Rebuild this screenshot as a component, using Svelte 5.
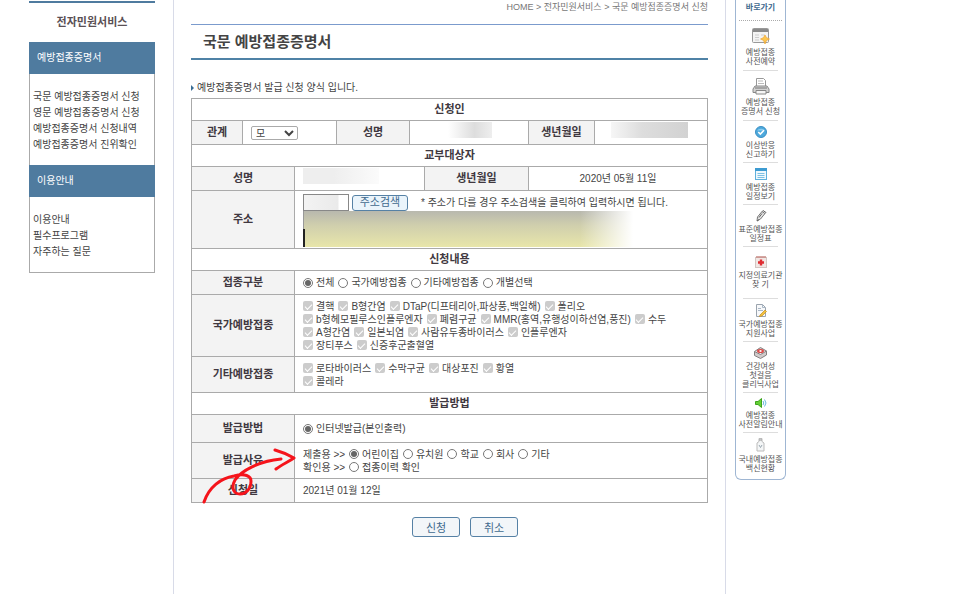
<script lang="ts">
	const menus = [
		{
			title: '예방접종증명서',
			items: [
				'국문 예방접종증명서 신청',
				'영문 예방접종증명서 신청',
				'예방접종증명서 신청내역',
				'예방접종증명서 진위확인'
			]
		},
		{ title: '이용안내', items: ['이용안내', '필수프로그램', '자주하는 질문'] }
	];

	const quickLinks = [
		{ icon: 'reserve', lines: ['예방접종', '사전예약'], size: 'roomy' },
		{ icon: 'printer', lines: ['예방접종', '증명서 신청'], size: 'roomy' },
		{ icon: 'check', lines: ['이상반응', '신고하기'] },
		{ icon: 'schedule', lines: ['예방접종', '일정보기'] },
		{ icon: 'pen', lines: ['표준예방접종', '일정표'] },
		{ icon: 'hospital', lines: ['지정의료기관', '찾 기'], size: 'tall' },
		{ icon: 'note', lines: ['국가예방접종', '지원사업'] },
		{ icon: 'box', lines: ['건강여성', '첫걸음', '클리닉사업'] },
		{ icon: 'speaker', lines: ['예방접종', '사전알림안내'] },
		{ icon: 'bottle', lines: ['국내예방접종', '백신현황'] }
	];

	const kinds = ['전체', '국가예방접종', '기타예방접종', '개별선택'];

	const nationalVaccines = [
		['결핵', 'B형간염', 'DTaP(디프테리아,파상풍,백일해)', '폴리오'],
		['b형헤모필루스인플루엔자', '폐렴구균', 'MMR(홍역,유행성이하선염,풍진)', '수두'],
		['A형간염', '일본뇌염', '사람유두종바이러스', '인플루엔자'],
		['장티푸스', '신증후군출혈열']
	];
	const otherVaccines = [['로타바이러스', '수막구균', '대상포진', '황열'], ['콜레라']];

	const reasons: { title: string; options: string[] }[] = [
		{ title: '제출용 >>', options: ['어린이집', '유치원', '학교', '회사', '기타'] },
		{ title: '확인용 >>', options: ['접종이력 확인'] }
	];

	let kind = $state('전체');
	let method = $state('인터넷발급(본인출력)');
	let reason = $state('어린이집');
	let relation = $state('모');
</script>

{#snippet vaccineRows(rows: string[][])}
	{#each rows as row, i (i)}
		<div class="line">
			{#each row as name (name)}
				<label><input type="checkbox" checked disabled />{name}</label>
			{/each}
		</div>
	{/each}
{/snippet}

{#snippet quickIcon(name: string)}
	{#if name === 'reserve'}
		<svg width="18" height="17" viewBox="0 0 18 17">
			<rect x="0.5" y="0.5" width="16" height="14" rx="1" fill="#f4f4f4" stroke="#999" />
			<path d="M1 1h15v3H1z" fill="#8a8a8a" />
			<path d="M3 7h4M3 9.500h4M3 12h4M9 7h4" stroke="#ccc" />
			<path d="M13 7l1.400 2.600L17.500 11l-3 1.400L13 16l-1.500-3.600L8.500 11l3-1.400z" fill="#fcc64f" stroke="#eda63a" stroke-width=".7" />
		</svg>
	{:else if name === 'printer'}
		<svg width="18" height="17" viewBox="0 0 18 17">
			<path d="M4.500 8V.5h7l2 2V8" fill="#fff" stroke="#999" />
			<path d="M6 3h5M6 5.500h6" stroke="#bbb" />
			<path d="M3 8h12l2 3v3.500H1V11z" fill="#d2d2d2" stroke="#888" />
			<path d="M4 12.500h10v3.500H4z" fill="#f5f5f5" stroke="#888" />
			<path d="M3 10h12" stroke="#777" />
		</svg>
	{:else if name === 'check'}
		<svg width="12" height="12" viewBox="0 0 12 12">
			<circle cx="6" cy="6" r="5.500" fill="#4ea9dc" stroke="#3b8fc4" />
			<path d="M2 4.500a4.500 3 0 0 1 8 0" fill="#8ccdf0" />
			<path d="M3.300 6l2 2L9 4.300" fill="none" stroke="#fff" stroke-width="1.600" />
		</svg>
	{:else if name === 'schedule'}
		<svg width="12" height="12" viewBox="0 0 12 12">
			<rect x="0.5" y="0.5" width="11" height="11" fill="#eef8fd" stroke="#5eb0dc" />
			<path d="M0 0h12v3H0z" fill="#3d9bd1" />
			<path d="M2.500 5.500h7M2.500 7.500h7M2.500 9.500h7" stroke="#7cc0e3" />
		</svg>
	{:else if name === 'pen'}
		<svg width="12" height="12" viewBox="0 0 12 12">
			<path d="M2 11l.5-4L7 1.500l3 2L5.500 9z" fill="#e4e4e4" stroke="#777" />
			<path d="M7 1.500L8 .5l3 2-1 1M4 7.500l3-4M2 11l2-1.500" fill="none" stroke="#666" />
		</svg>
	{:else if name === 'hospital'}
		<svg width="12" height="12" viewBox="0 0 12 12">
			<rect x="0.5" y="1.500" width="11" height="10" fill="#f1e7e4" stroke="#d3c6c2" />
			<path d="M1 1h10" stroke="#c98a84" stroke-width="1.500" />
			<path d="M6 3.500v6M3 6.500h6" stroke="#df2d32" stroke-width="2.400" />
		</svg>
	{:else if name === 'note'}
		<svg width="12" height="13" viewBox="0 0 12 13">
			<path d="M1.500.5h6l3 3v9h-9z" fill="#f7f8fa" stroke="#9ba4ae" />
			<path d="M7.500.5v3h3M3 4.500h3M3 6.500h5" fill="none" stroke="#a9b7c5" />
			<path d="M5 11l5-5 1.500 1.500L7 12l-2.500.5z" fill="#f3c23c" stroke="#c48d23" stroke-width=".7" />
		</svg>
	{:else if name === 'box'}
		<svg width="13" height="12" viewBox="0 0 13 12">
			<path d="M.5 4.500L6.500.5l6 3.500V8l-6 3.500-6-3z" fill="#d0cbcb" stroke="#858080" />
			<path d="M.5 4.500l6 3 6-3.500" fill="#f4f0f0" stroke="#858080" />
			<ellipse cx="6.500" cy="4" rx="3.500" ry="2" fill="#dc4a48" />
			<path d="M5 4h3M6.500 3v2" stroke="#fff" stroke-width=".8" />
		</svg>
	{:else if name === 'speaker'}
		<svg width="12" height="10" viewBox="0 0 12 10">
			<path d="M.5 3.500h2.500L6.500.5v9L3 6.500H.5z" fill="#65cf35" stroke="#3da51d" />
			<path d="M8 3q1.500 2 0 4M9.500 1.500q3 3.500 0 7" fill="none" stroke="#6bb9dc" />
		</svg>
	{:else}
		<svg width="9" height="14" viewBox="0 0 9 14">
			<path d="M3 .5h3v3l2 1.500v8H1V5l2-1.500z" fill="#f4f6f7" stroke="#bbb" />
			<path d="M3 2h3" stroke="#999" />
			<path d="M3 7l1.500 2.500L6 7" fill="none" stroke="#9aa7b0" />
		</svg>
	{/if}
{/snippet}

<div class="page">
	<aside class="side">
		<h2>전자민원서비스</h2>
		<nav>
			{#each menus as menu (menu.title)}
				<h3>{menu.title}</h3>
				<ul>
					{#each menu.items as item (item)}
						<li><a href="#menu">{item}</a></li>
					{/each}
				</ul>
			{/each}
		</nav>
	</aside>

	<main>
		<p class="breadcrumb">HOME &gt; 전자민원서비스 &gt; 국문 예방접종증명서 신청</p>
		<h1>국문 예방접종증명서</h1>
		<p class="guide">예방접종증명서 발급 신청 양식 입니다.</p>

		<form onsubmit={(e) => e.preventDefault()}>
			<div class="sheet">
				<table>
					<colgroup>
						<col class="c1" /><col class="c2" /><col class="c3" /><col class="c4" />
						<col class="c5" /><col class="c6" /><col class="c7" /><col class="c8" />
					</colgroup>
					<tbody>
						<tr class="section"><th colspan="8">신청인</th></tr>
						<tr class="single">
							<th scope="row"><label for="relation">관계</label></th>
							<td colspan="2">
								<select id="relation" bind:value={relation}>
									<option>모</option>
									<option>부</option>
								</select>
							</td>
							<th scope="row">성명</th>
							<td colspan="2"><div class="masked applicant"></div></td>
							<th scope="row">생년월일</th>
							<td><div class="masked birth"></div></td>
						</tr>

						<tr class="section"><th colspan="8">교부대상자</th></tr>
						<tr class="single">
							<th scope="row" colspan="2">성명</th>
							<td colspan="3"><div class="masked child"></div></td>
							<th scope="row">생년월일</th>
							<td colspan="2" class="center">2020년 05월 11일</td>
						</tr>
						<tr class="address">
							<th scope="row" colspan="2">주소</th>
							<td colspan="6">
								<div class="zip-row">
									<input class="zip" type="text" aria-label="우편번호" />
									<button type="button" class="search">주소검색</button>
									<span>* 주소가 다를 경우 주소검색을 클릭하여 입력하시면 됩니다.</span>
								</div>
								<div class="address-lines">
									<input type="text" aria-label="주소" />
									<input type="text" class="detail" aria-label="상세주소" />
								</div>
							</td>
						</tr>

						<tr class="section"><th colspan="8">신청내용</th></tr>
						<tr class="single">
							<th scope="row" colspan="2">접종구분</th>
							<td colspan="6">
								<div class="line">
									{#each kinds as option (option)}
										<label><input type="radio" name="kind" value={option} bind:group={kind} />{option}</label>
									{/each}
								</div>
							</td>
						</tr>
						<tr class="national">
							<th scope="row" colspan="2">국가예방접종</th>
							<td colspan="6">{@render vaccineRows(nationalVaccines)}</td>
						</tr>
						<tr class="double">
							<th scope="row" colspan="2">기타예방접종</th>
							<td colspan="6">{@render vaccineRows(otherVaccines)}</td>
						</tr>

						<tr class="section"><th colspan="8">발급방법</th></tr>
						<tr class="method">
							<th scope="row" colspan="2">발급방법</th>
							<td colspan="6">
								<div class="line">
									<label>
										<input type="radio" name="method" value="인터넷발급(본인출력)" bind:group={method} />인터넷발급(본인출력)
									</label>
								</div>
							</td>
						</tr>
						<tr class="double">
							<th scope="row" colspan="2">발급사유</th>
							<td colspan="6">
								{#each reasons as group (group.title)}
									<div class="line">
										<span>{group.title}</span>
										{#each group.options as option (option)}
											<label><input type="radio" name="reason" value={option} bind:group={reason} />{option}</label>
										{/each}
									</div>
								{/each}
							</td>
						</tr>
						<tr class="single">
							<th scope="row" colspan="2">신청일</th>
							<td colspan="6">2021년 01월 12일</td>
						</tr>
					</tbody>
				</table>

				<!-- hand-drawn arrow pointing at the reason row -->
				<svg class="arrow" width="96" height="58" viewBox="200 446 96 58" aria-hidden="true">
					<path d="M204 501C209 486 221 477 234 475C245 472 251 475 251 480C251 488 246 493 240 493C233 493 231 486 235 479C241 470 259 460 281 458" />
					<path d="M275 449C282 451 289 454 294 457C288 461 281 464 276 468" />
				</svg>
			</div>

			<div class="actions">
				<button type="submit">신청</button>
				<button type="button">취소</button>
			</div>
		</form>
	</main>

	<aside class="quick">
		<h2>바로가기</h2>
		<ul>
			{#each quickLinks as link (link.icon)}
				<li class={link.size}>
					<a href="#quick">
						{@render quickIcon(link.icon)}
						<span>
							{#each link.lines as text, i (i)}{#if i > 0}<br />{/if}{text}{/each}
						</span>
					</a>
				</li>
			{/each}
		</ul>
	</aside>
</div>

<style>
	:global(body) {
		background: #fff;
	}

	.page {
		display: flex;
		align-items: flex-start;
		box-sizing: border-box;
		max-width: 786px;
		min-height: 100vh;
		padding-left: 29px;
		font-family: 'Liberation Sans', 'Noto Sans CJK KR', sans-serif;
		font-size: 10px;
		line-height: 13px;
		color: #444;
	}

	h1,
	h2,
	h3,
	p,
	ul {
		margin: 0;
		padding: 0;
	}

	ul {
		list-style: none;
	}

	a {
		color: inherit;
		text-decoration: none;
	}

	input,
	select,
	button {
		box-sizing: border-box;
		margin: 0;
		font-family: inherit;
		font-size: inherit;
		color: inherit;
	}

	/* left menu */
	.side {
		flex: none;
		width: 126px;
		margin-top: 1px;
		border-top: 2px solid #4f7b9f;
	}

	.side h2 {
		padding: 11px 0 12px;
		text-align: center;
		font-size: 11px;
		line-height: 16px;
		color: #5a5055;
	}

	.side nav {
		border: 1px solid #aaa;
		border-top: 0;
	}

	.side h3 {
		margin: 0 -1px;
		padding: 8px;
		background: #4f7b9f;
		color: #fff;
		font-size: 10px;
		font-weight: 400;
		line-height: 16px;
	}

	.side ul {
		padding: 15px 3px 12px;
		line-height: 16px;
		white-space: nowrap;
	}

	/* main column */
	main {
		flex: 1;
		min-width: 0;
		align-self: stretch;
		margin: 0 9px 0 18px;
		padding: 0 17px;
		border: solid #d8dbe8;
		border-width: 0 1px;
	}

	.breadcrumb {
		padding-bottom: 10px;
		text-align: right;
		font-size: 9px;
		line-height: 14px;
		color: #777;
	}

	h1 {
		padding: 6px 12px 5px;
		border-top: 1px solid #7b9bcd;
		border-bottom: 2px solid #4f82a6;
		font-size: 15px;
		line-height: 22px;
		color: #444;
	}

	.guide {
		display: flex;
		align-items: center;
		gap: 3px;
		padding: 21px 0 4px;
	}

	.guide::before {
		content: '';
		border: 3px solid transparent;
		border-left-color: #3a6d94;
		border-right: 0;
	}

	.sheet {
		position: relative;
	}

	table {
		width: 100%;
		table-layout: fixed;
		border-collapse: collapse;
	}

	.c1 { width: 51px; }
	.c2 { width: 52px; }
	.c3 { width: 42px; }
	.c4 { width: 73px; }
	.c5 { width: 15px; }
	.c6 { width: 104px; }
	.c7 { width: 66px; }
	.c8 { width: 113px; }

	th,
	td {
		padding: 0 0 0 8px;
		border: 1px solid #aaa;
		text-align: left;
	}

	th {
		padding: 0;
		background: #f3f3f3;
		text-align: center;
		font-size: 11px;
		color: #403840;
	}

	.section { height: 22px; }
	.single { height: 24px; }
	.method { height: 28px; }
	.double { height: 36px; }
	.address { height: 58px; }
	.national { height: 62px; }

	.section th {
		background: #fff;
	}

	.center {
		padding: 0;
		text-align: center;
	}

	.line {
		display: flex;
		align-items: center;
		gap: 4px;
		white-space: nowrap;
	}

	.line label {
		display: flex;
		align-items: center;
		gap: 3px;
	}

	input[type='radio'],
	input[type='checkbox'] {
		appearance: none;
		display: grid;
		place-items: center;
		flex: none;
		width: 10px;
		height: 10px;
	}

	input[type='radio'] {
		border: 1px solid #777;
		border-radius: 50%;
		background: #fff;
	}

	input[type='radio']:checked::before {
		content: '';
		width: 6px;
		height: 6px;
		border-radius: 50%;
		background: #666;
	}

	input[type='checkbox'] {
		border-radius: 2px;
		background: #ccc;
	}

	input[type='checkbox']::before {
		content: '';
		box-sizing: border-box;
		width: 7px;
		height: 4px;
		border: solid #fff;
		border-width: 0 0 1px 1px;
		transform: rotate(-45deg);
	}

	select {
		display: block;
		width: 47px;
		height: 14px;
		padding: 0;
		border: 1px solid #aaa;
		border-radius: 2px;
		background: #fff;
	}

	.masked {
		height: 16px;
	}

	.applicant {
		width: 44px;
		margin: -6px 0 0 30px;
		background: linear-gradient(90deg, #fff, #ddd 60%, #eee);
	}

	.birth {
		width: 77px;
		margin: -6px 0 0 8px;
		background: linear-gradient(90deg, #f6f6f6, #ddd 40%, #d2d2d2);
	}

	.child {
		width: 76px;
		margin-top: -6px;
		background: linear-gradient(90deg, #eee, #eee 40%, #fbfbfb);
	}

	.address td {
		vertical-align: top;
		padding-top: 3px;
	}

	.zip-row {
		display: flex;
		align-items: center;
		gap: 3px;
		white-space: nowrap;
	}

	.zip {
		width: 46px;
		height: 17px;
		border: 1px solid #888;
		background: linear-gradient(90deg, #f3f3f3, #eaeaea 34px, #fff 35px);
	}

	.zip-row span {
		padding-left: 10px;
	}

	button {
		border: 1px solid #5681a5;
		border-radius: 3px;
		background: #f3f6f9;
		color: #416a8e;
		font-size: 11px;
	}

	.search {
		width: 56px;
		height: 16px;
		padding: 0;
		background: #eaf4fb;
		line-height: 13px;
	}

	.address-lines {
		display: flex;
		flex-direction: column;
		width: 330px;
		background:
			linear-gradient(90deg, transparent 84%, #fff),
			linear-gradient(#b8b8ae, #d0cfad 40%, #e8e6aa);
	}

	.address-lines input {
		height: 18px;
		border: 0;
		border-left: 1px solid #999;
		background: transparent;
	}

	.address-lines .detail {
		border-left: 2px solid #222;
	}

	.arrow {
		position: absolute;
		left: 9px;
		bottom: -2px;
		fill: none;
		stroke: #f5141b;
		stroke-width: 3;
		stroke-linecap: round;
		stroke-linejoin: round;
		pointer-events: none;
	}

	.actions {
		display: flex;
		justify-content: center;
		gap: 10px;
		padding: 14px 0 0 31px;
	}

	.actions button {
		width: 48px;
		height: 20px;
		padding: 0;
	}

	/* quick links */
	.quick {
		flex: none;
		box-sizing: border-box;
		width: 51px;
		border: 1px solid #9fb6d3;
		border-top: 0;
		border-radius: 0 0 6px 6px;
		text-align: center;
		font-size: 8px;
		line-height: 9px;
		color: #555;
	}

	.quick h2 {
		margin: 0 3px;
		padding: 3px 0 8px;
		border-bottom: 1px dotted #aaa;
		color: #416a8e;
		font-size: 8px;
		line-height: 9px;
	}

	.quick li {
		padding-top: 5px;
	}

	.quick li::after {
		content: '';
		display: block;
		margin: 3px 7px 0;
		border-bottom: 1px solid #ddd;
	}

	.quick li.roomy {
		padding-top: 7px;
	}

	.quick li.roomy::after {
		margin-top: 4px;
	}

	.quick li.tall {
		padding-top: 9px;
	}

	.quick li.tall::after {
		margin-top: 9px;
	}

	.quick li:last-child::after {
		margin-top: 5px;
		border-color: transparent;
	}

	.quick a {
		display: flex;
		flex-direction: column;
		align-items: center;
		gap: 3px;
		white-space: nowrap;
	}
</style>
